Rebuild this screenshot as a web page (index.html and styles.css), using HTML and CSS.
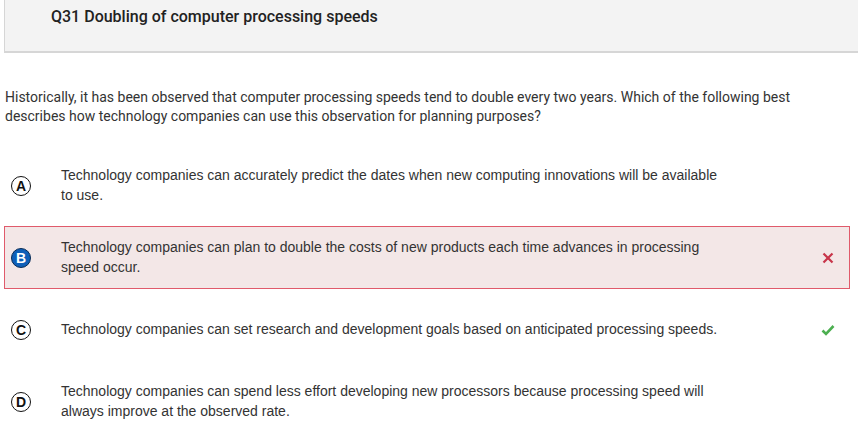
FILE: index.html
```html
<!DOCTYPE html>
<html>
<head>
<meta charset="utf-8">
<link rel="stylesheet" href="styles.css">
</head>
<body>
<div class="header">
  <div class="title">Q31 Doubling of computer processing speeds</div>
</div>
<p class="question">Historically, it has been observed that computer processing speeds tend to double every two years. Which of the following best describes how technology companies can use this observation for planning purposes?</p>
<div class="options">
  <div class="option">
    <span class="badge">A</span>
    <span class="text">Technology companies can accurately predict the dates when new computing innovations will be available to use.</span>
    <span class="mark"></span>
  </div>
  <div class="option wrong">
    <span class="badge selected">B</span>
    <span class="text">Technology companies can plan to double the costs of new products each time advances in processing speed occur.</span>
    <span class="mark">
      <svg width="12" height="12" viewBox="0 0 12 12"><path d="M1.5 1.5 L10.5 10.5 M10.5 1.5 L1.5 10.5" stroke="#c8354a" stroke-width="2.2" fill="none"/></svg>
    </span>
  </div>
  <div class="option">
    <span class="badge">C</span>
    <span class="text">Technology companies can set research and development goals based on anticipated processing speeds.</span>
    <span class="mark">
      <svg width="14" height="12" viewBox="0 0 14 12"><path d="M1.5 6.5 L5 10 L12.5 2" stroke="#4caf50" stroke-width="2.6" fill="none"/></svg>
    </span>
  </div>
  <div class="option">
    <span class="badge">D</span>
    <span class="text">Technology companies can spend less effort developing new processors because processing speed will always improve at the observed rate.</span>
    <span class="mark"></span>
  </div>
</div>
</body>
</html>
```
FILE: styles.css
```css
html, body {
  margin: 0;
  padding: 0;
  background: #fff;
}
body {
  width: 858px;
  height: 437px;
  overflow: hidden;
}
.header {
  margin-left: 4px;
  height: 53px;
  background: #f3f3f3;
  border-left: 1px solid #d6d6d6;
  border-bottom: 2px solid #d6d6d6;
  box-sizing: border-box;
  padding: 7px 0 0 46px;
}
.title {
  font-family: Roboto, "Liberation Sans", sans-serif;
  font-weight: 500;
  font-size: 16px;
  color: #222;
  line-height: 20px;
}
.question {
  margin: 35px 0 0 5px;
  width: 800px;
  font-family: Roboto, "Liberation Sans", sans-serif;
  font-size: 14px;
  line-height: 19px;
  color: #333;
}
.options {
  margin-top: 28px;
  display: flex;
  flex-direction: column;
  gap: 9px;
  margin-left: 4px;
  width: 846px;
}
.option {
  height: 63px;
  box-sizing: border-box;
  border: 1px solid transparent;
  display: flex;
  align-items: center;
  padding-left: 6px;
}
.option.wrong {
  background: #f3e7e7;
  border-color: #e05a6b;
}
.badge {
  width: 20px;
  height: 20px;
  box-sizing: border-box;
  border: 1.5px solid #111;
  border-radius: 50%;
  display: flex;
  align-items: center;
  justify-content: center;
  font-family: "Liberation Sans", Arial, sans-serif;
  font-weight: bold;
  font-size: 14px;
  line-height: 1;
  color: #111;
  flex: none;
}
.badge.selected {
  background: #0f5fb8;
  border-color: #0a2c55;
  color: #fff;
}
.text {
  margin-left: 30px;
  margin-top: -2px;
  width: 665px;
  font-family: "Liberation Sans", Arial, sans-serif;
  font-size: 14px;
  line-height: 20px;
  color: #333;
}
.mark {
  margin-left: auto;
  margin-right: 14px;
  width: 14px;
  display: flex;
  justify-content: center;
  align-items: center;
}
```
